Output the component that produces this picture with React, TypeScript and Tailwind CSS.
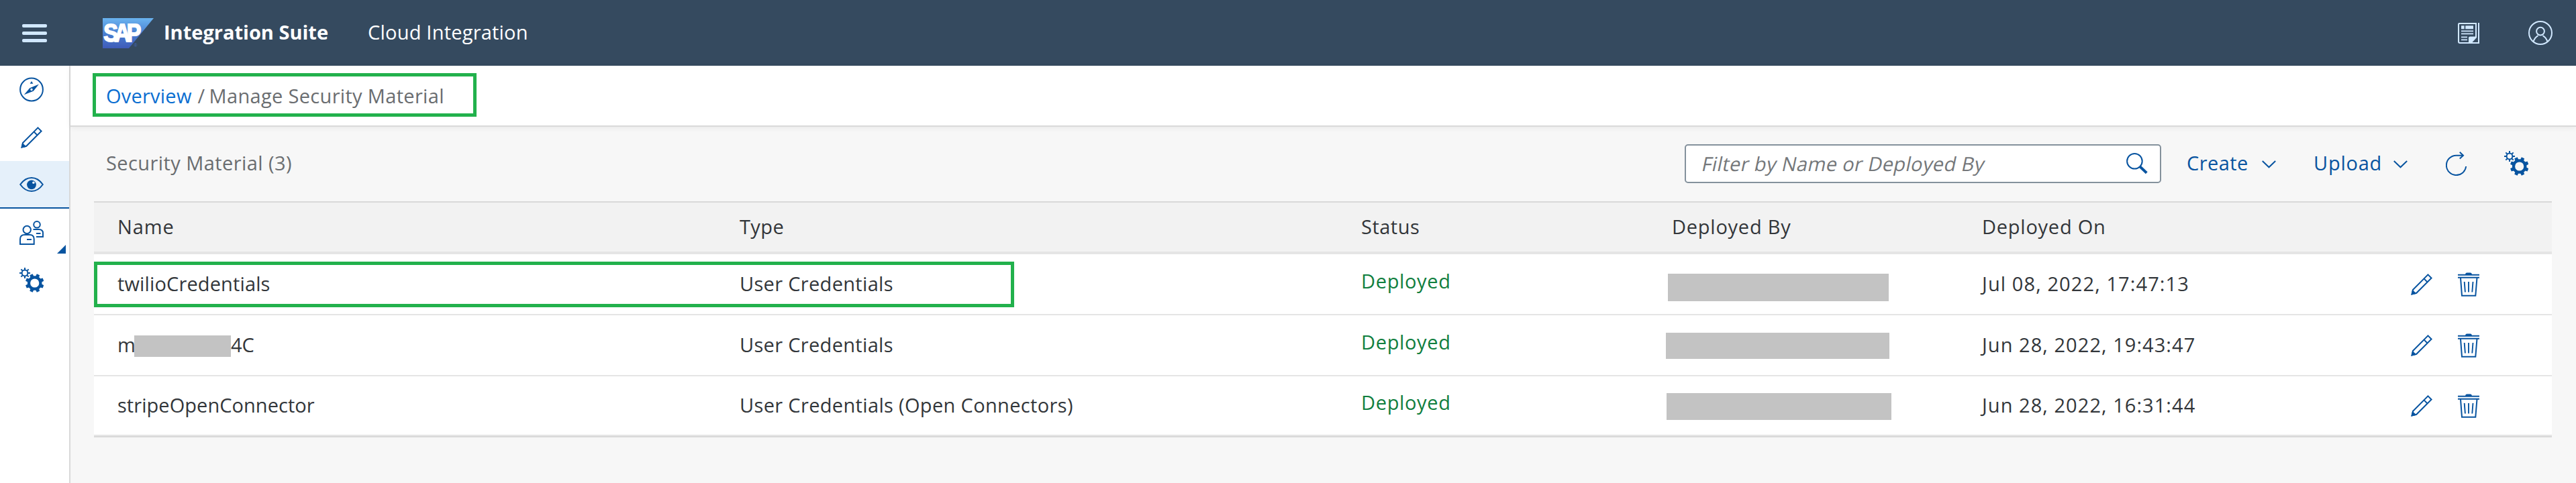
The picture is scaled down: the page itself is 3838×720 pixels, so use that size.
import type { ReactNode } from "react";

function Icon({ w, h, className, children }: { w: number; h: number; className?: string; children: ReactNode }) {
  return (
    <svg width={w} height={h} viewBox={`0 0 ${w} ${h}`} fill="none" stroke="currentColor" strokeWidth="2" className={`shrink-0 ${className ?? ""}`}>
      {children}
    </svg>
  );
}

const STEPS = [0, 1, 2, 3, 4, 5, 6, 7];

function GearsIcon({ className }: { className?: string }) {
  return (
    <Icon w={36} h={37} className={className}>
      <circle cx="8" cy="8" r="4.4" />
      <circle cx="22.7" cy="23" r="8.7" strokeWidth="4.2" />
      <g fill="currentColor" stroke="none">
        {STEPS.map((i) => (
          <rect key={i} x="7" y="0" width="2" height="3.6" transform={`rotate(${i * 45} 8 8)`} />
        ))}
        {STEPS.map((i) => (
          <path key={i} d="M20 13.5 L20.4 9.2 H25 L25.4 13.5 Z" transform={`rotate(${i * 45 + 22.5} 22.7 23)`} />
        ))}
      </g>
    </Icon>
  );
}

function PencilIcon({ className }: { className?: string }) {
  return (
    <Icon w={32} h={32} className={className}>
      <path d="M25.5 1.4 L30.6 6.5 L8.3 28.8 L1.6 30.5 L3.2 23.7 Z" />
      <path d="M19.5 7.4 L24.6 12.5" />
      <path d="M0.3 31.8 L2.3 22.8 L4.5 26 L8.8 29.8 Z" fill="currentColor" stroke="none" />
    </Icon>
  );
}

function TrashIcon({ className }: { className?: string }) {
  return (
    <Icon w={32} h={36} className={className}>
      <path d="M11 3 Q11.5 0.6 13.5 0.6 H18.5 Q20.5 0.6 21 3 Z" fill="currentColor" stroke="none" />
      <path d="M0 3.7 H32 M0 7.7 H32" />
      <path d="M4 8 L6 34.8 H26.3 L28.5 8" />
      <path d="M9.7 14 L10.9 29.5 M16 14 V29.5 M22.5 14 L21.3 29.5" strokeWidth="1.9" />
    </Icon>
  );
}

function CompassIcon() {
  return (
    <Icon w={36} h={37}>
      <circle cx="18" cy="18.5" r="16.9" />
      <path d="M29 10.6 L20.8 20.8 L6.8 26.2 L15.3 16.2 Z M18 16.7 a1.7 1.7 0 1 0 0.01 0 Z" fill="currentColor" fillRule="evenodd" stroke="none" />
      <path d="M18 6 L20.4 9.8 H15.6 Z" fill="currentColor" stroke="none" />
    </Icon>
  );
}

function EyeIcon() {
  return (
    <Icon w={36} h={22}>
      <path d="M1.2 11 C6 4.2 11.5 1 18 1 S30 4.2 34.8 11 C30 17.8 24.5 21 18 21 S6 17.8 1.2 11 Z" />
      <circle cx="18" cy="11.3" r="6.9" fill="currentColor" stroke="none" />
      <circle cx="20.9" cy="8.2" r="1.8" fill="#e5f0fa" stroke="none" />
    </Icon>
  );
}

function PeopleIcon() {
  return (
    <Icon w={36} h={36}>
      <circle cx="11.2" cy="13.5" r="5.7" />
      <path d="M1 35 V27.5 Q1 21 7.5 21 H15.5 Q21.7 21 21.7 27.5 V35 Z M11 28 H18" />
      <circle cx="26" cy="5.8" r="4.8" />
      <path d="M20.5 13 H29 Q35 13 35 18.5 V24 H25 M25 19 H31.5" />
    </Icon>
  );
}

function NewsIcon() {
  return (
    <Icon w={32} h={31}>
      <path d="M27 0.9 H2.5 Q1 0.9 1 2.5 V28 Q1 30 3 30 H31 V0" />
      <path d="M27 0 V21" />
      <path d="M5 4.3 H9.6 V9.3 H5 Z M11.3 4.3 H23 V9.3 H11.3 Z M16 30 V22 Q16 20.5 18 20.5 H28 V22 L20.5 30 Z" fill="currentColor" stroke="none" />
      <path d="M5 12.3 H23 M5 16.3 H23 M5 21.3 H14 M5 25.3 H14" strokeWidth="1.8" />
    </Icon>
  );
}

function UserIcon() {
  return (
    <Icon w={36} h={36}>
      <circle cx="18" cy="18" r="17" />
      <circle cx="18" cy="15.6" r="5.9" />
      <path d="M7.6 31 C9.2 26 12.3 23.4 14.5 22.2 M28.4 31 C26.8 26 23.7 23.4 21.5 22.2" />
    </Icon>
  );
}

function SearchIcon() {
  return (
    <Icon w={33} h={32}>
      <circle cx="12.4" cy="12.3" r="11.3" />
      <path d="M20.5 20.5 L30.3 29.8" strokeWidth="4" />
    </Icon>
  );
}

function ChevronIcon() {
  return (
    <Icon w={21} h={12}>
      <path d="M0.8 1 L10.5 10.3 L20.2 1" />
    </Icon>
  );
}

function RefreshIcon() {
  return (
    <Icon w={32} h={36}>
      <path d="M30.2 22 A14.7 14.7 0 1 1 15.6 5.7 H26" />
      <path d="M20.8 0.8 L26 5.7 L20.8 10.6" />
    </Icon>
  );
}

function SapLogo() {
  return (
    <svg width="76" height="45" viewBox="0 0 76 45" className="shrink-0">
      <defs>
        <linearGradient id="sap" x1="0" y1="0" x2="0" y2="1">
          <stop offset="0" stopColor="#6ab4f0" />
          <stop offset="0.5" stopColor="#4a80d2" />
          <stop offset="1" stopColor="#3f5bb8" />
        </linearGradient>
      </defs>
      <path d="M0 0 H76 L39 45 H0 Z" fill="url(#sap)" />
      <text x="1.2" y="35" fontFamily="Liberation Sans, Arial, sans-serif" fontWeight="700" fontSize="37" letterSpacing="-6" textLength="51" lengthAdjust="spacingAndGlyphs" fill="#fff" stroke="#fff" strokeWidth="1.8">SAP</text>
      <text x="46.5" y="43" fontFamily="Liberation Sans, Arial, sans-serif" fontSize="7" fill="#4468bb">®</text>
    </svg>
  );
}

const GRID = "grid grid-cols-[927px_926px_463px_462px_639px_1fr] pl-[35px]";

type Row = { name: ReactNode; type: ReactNode; date: string; dateClass: string; mask: string };

const ROWS: Row[] = [
  {
    name: <span className="tracking-[0.13px]">twilioCredentials</span>,
    type: <span className="tracking-[0.32px]">User Credentials</span>,
    date: "Jul 08, 2022, 17:47:13",
    dateClass: "tracking-[1.1px]",
    mask: "-ml-[6px] mt-[10px] h-[41px] w-[329px]",
  },
  {
    name: (
      <>
        <span className="w-[25px]">m</span>
        <span className="mt-[3px] h-8 w-36 bg-[#c3c3c3]" />
        <span>4C</span>
      </>
    ),
    type: <span className="tracking-[0.32px]">User Credentials</span>,
    date: "Jun 28, 2022, 19:43:47",
    dateClass: "tracking-[1.05px]",
    mask: "-ml-[9px] mt-[2px] h-[39px] w-[333px]",
  },
  {
    name: <span className="tracking-[0.05px]">stripeOpenConnector</span>,
    type: <span className="tracking-[0.34px]">User Credentials (Open Connectors)</span>,
    date: "Jun 28, 2022, 16:31:44",
    dateClass: "tracking-[1.05px]",
    mask: "-ml-[8px] mt-[3px] h-[40px] w-[335px]",
  },
];

export default function App() {
  return (
    <div className="flex h-[720px] w-[3838px] flex-col overflow-hidden bg-[#f7f7f7] font-['Open_Sans','Noto_Sans',sans-serif] text-[29px] leading-[40px] text-[#32363a]">
      <header className="flex h-[98px] shrink-0 items-center bg-[#354a5f] pr-[35px] pl-[33px] text-white">
        <div className="mt-px flex w-[37px] flex-col gap-[6px]">
          <span className="h-[5px] rounded-[2px] bg-[#d1e8ff]" />
          <span className="h-[5px] rounded-[2px] bg-[#d1e8ff]" />
          <span className="h-[5px] rounded-[2px] bg-[#d1e8ff]" />
        </div>
        <div className="ml-[83px] flex">
          <SapLogo />
        </div>
        <span className="ml-[15px] w-[304px] pb-[2px] font-bold">Integration Suite</span>
        <span className="pb-[2px] tracking-[0.21px]">Cloud Integration</span>
        <div className="ml-auto flex items-center gap-[73px] text-[#d1e8ff]">
          <NewsIcon />
          <UserIcon />
        </div>
      </header>

      <div className="flex min-h-0 flex-1">
        <nav className="flex w-[105px] shrink-0 flex-col border-r-2 border-[#d9d9d9] bg-white text-[#0854a0]">
          <div className="flex h-[71px] items-center pl-[29px]"><CompassIcon /></div>
          <div className="flex h-[71px] items-center pl-[31px]"><PencilIcon /></div>
          <div className="flex h-[71px] items-center border-b-2 border-[#0854a0] bg-[#e5f0fa] pl-[29px]"><EyeIcon /></div>
          <div className="relative flex h-[71px] items-center pl-[29px]">
            <PeopleIcon />
            <svg width="13" height="13" viewBox="0 0 13 13" className="absolute right-[5px] bottom-[4px]">
              <path d="M13 0 V13 H0 Z" fill="currentColor" />
            </svg>
          </div>
          <div className="flex h-[71px] items-center pl-[29px]"><GearsIcon /></div>
        </nav>

        <main className="flex min-w-0 flex-1 flex-col">
          <div className="relative flex h-[91px] shrink-0 items-center border-b-2 border-[#d9d9d9] bg-white pl-[33px] shadow-[0_2px_8px_rgba(0,0,0,0.06)]">
            <div className="-mt-[2px] flex h-[65px] w-[572px] items-center border-[5px] border-[#22b14c] pt-[3px] pl-[15px] text-[#6a6d70]">
              <span className="tracking-[0.23px] text-[#0a6ed1]">Overview</span>
              <span className="w-[26px] pl-[9px]">/</span>
              <span className="tracking-[0.32px]">Manage Security Material</span>
            </div>
          </div>

          <div className="flex h-[111px] shrink-0 items-center pr-[71px] pl-[53px] text-[#0854a0]">
            <span className="pb-[3px] tracking-[0.42px] text-[#6a6d70]">Security Material (3)</span>
            <div className="-mt-px ml-auto flex h-[58px] w-[710px] items-center justify-between rounded-[5px] border-2 border-[#84919c] bg-white pr-[17px] pl-[22px]">
              <span className="inline-block origin-[0_31px] -skew-x-12 pb-px tracking-[0.38px] text-[#74777a]">Filter by Name or Deployed By</span>
              <SearchIcon />
            </div>
            <span className="ml-[38px] w-[112px] pb-[3px] tracking-[0.42px]">Create</span>
            <ChevronIcon />
            <span className="ml-[56px] w-[119px] pb-[3px] tracking-[0.75px]">Upload</span>
            <ChevronIcon />
            <div className="ml-[57px] pb-[2px]"><RefreshIcon /></div>
            <div className="ml-[55px] pb-[2px]"><GearsIcon /></div>
          </div>

          <div className="mr-[36px] ml-[35px] flex shrink-0 flex-col border-y-2 border-[#d9d9d9] bg-white">
            <div className={`${GRID} h-[77px] items-center border-b-4 border-[#e5e5e5] bg-[#f2f2f2] pb-px`}>
              <span className="tracking-[0.88px]">Name</span>
              <span className="tracking-[0.4px]">Type</span>
              <span className="tracking-[0.5px]">Status</span>
              <span className="tracking-[0.75px]">Deployed By</span>
              <span className="tracking-[0.75px]">Deployed On</span>
            </div>
            <div className="relative divide-y-2 divide-[#e5e5e5]">
              {ROWS.map((r, i) => (
                <div key={i} className={`${GRID} ${i < 2 ? "h-[91px]" : "h-[89px]"} items-center`}>
                  <div className="flex items-center pb-px">{r.name}</div>
                  <div className="pb-px">{r.type}</div>
                  <div className="pb-[9px] tracking-[0.65px] text-[#107e3e]">Deployed</div>
                  <div className={`bg-[#c3c3c3] ${r.mask}`} />
                  <div className={`pb-px ${r.dateClass}`}>{r.date}</div>
                  <div className="flex items-center gap-[38px] text-[#0854a0]">
                    <PencilIcon />
                    <TrashIcon />
                  </div>
                </div>
              ))}
              <div className="absolute top-[11px] left-0 h-[68px] w-[1371px] border-[5px] border-[#22b14c]" />
            </div>
          </div>
        </main>
      </div>
    </div>
  );
}
